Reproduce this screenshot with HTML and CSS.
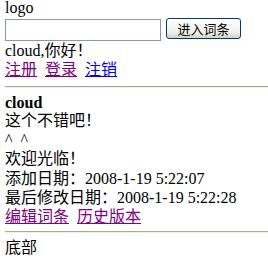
FILE: index.html
```html
<!DOCTYPE html>
<html lang="zh-CN">
<head>
    <meta charset="UTF-8">
    <title>词条</title>
    <link rel="stylesheet" href="styles.css">
</head>
<body>
    <div class="header">
        <div class="logo">logo</div>
        <form class="search">
            <input type="text" class="search-box">
            <button type="button" class="search-btn">进入词条</button>
        </form>
        <div class="greeting">cloud,你好！</div>
        <div class="links">
            <a href="#" class="visited">注册</a>
            <a href="#" class="visited">登录</a>
            <a href="#">注销</a>
        </div>
    </div>
    <hr>
    <div class="entry">
        <div class="author">cloud</div>
        <div class="content">这个不错吧！</div>
        <div class="smile">^&nbsp; ^</div>
        <div class="welcome">欢迎光临！</div>
        <div>添加日期：2008-1-19 5:22:07</div>
        <div>最后修改日期：2008-1-19 5:22:28</div>
        <div class="links">
            <a href="#" class="visited">编辑词条</a>
            <a href="#" class="visited">历史版本</a>
        </div>
    </div>
    <hr class="bottom-rule">
    <div class="footer">底部</div>
</body>
</html>
```

FILE: styles.css
```css
body {
    margin: 0 0 0 5px;
    font-family: "Liberation Serif", "Noto Sans CJK SC", serif;
    font-size: 16px;
    line-height: 19px;
    color: #000;
    background: #fff;
}
.logo {
    line-height: 15px;
}
.search {
    display: flex;
    align-items: flex-start;
    gap: 5px;
    height: 24px;
    margin: 3px 0 0 0;
}
.search-box {
    box-sizing: border-box;
    width: 156px;
    height: 22px;
    margin: 1px 0 0 0;
    padding: 0 2px;
    border: 1px solid #7f9db9;
    background: #fff;
}
.search-btn {
    box-sizing: border-box;
    width: 75px;
    height: 21px;
    padding: 0;
    border: 1px solid #003c74;
    border-radius: 3px;
    background: linear-gradient(#ffffff, #f0f0ea 70%, #d6d0c5);
    font-family: "Noto Sans CJK SC", sans-serif;
    font-size: 13px;
    line-height: 17px;
    color: #000;
}
.greeting {
    line-height: 18px;
}
.links {
    display: flex;
    gap: 8px;
}
a {
    color: #0000ff;
}
a.visited {
    color: #800080;
}
hr {
    height: 0;
    margin: 7px 0 6px 0;
    border: none;
    border-top: 1px solid #aca899;
    border-bottom: 1px solid #f1efe2;
}
.author {
    font-weight: bold;
    line-height: 17px;
}
.welcome {
    line-height: 20px;
}
.bottom-rule {
    margin: 5px 0 5px 0;
}
```
